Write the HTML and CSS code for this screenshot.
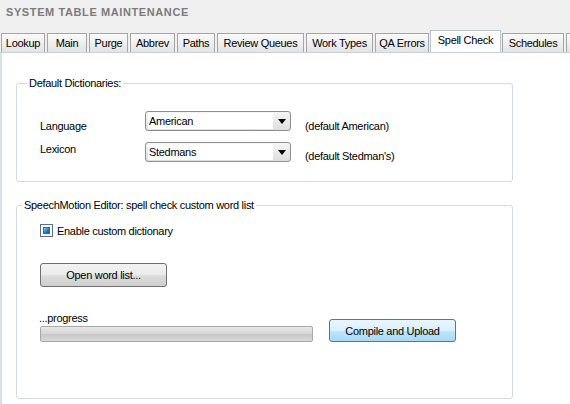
FILE: index.html
```html
<!DOCTYPE html>
<html>
<head>
    <title>System Table Maintenance</title>
    <meta charset="utf-8">
    <link rel="stylesheet" href="styles.css">
</head>
<body>
    <div class="title">SYSTEM TABLE MAINTENANCE</div>

    <div class="tabs">
        <div class="tab">Lookup</div>
        <div class="tab">Main</div>
        <div class="tab">Purge</div>
        <div class="tab">Abbrev</div>
        <div class="tab">Paths</div>
        <div class="tab">Review Queues</div>
        <div class="tab">Work Types</div>
        <div class="tab">QA Errors</div>
        <div class="tab active">Spell Check</div>
        <div class="tab">Schedules</div>
        <div class="tab"></div>
    </div>

    <div class="panel">
        <fieldset class="group dicts">
            <legend>Default Dictionaries:</legend>
            <div class="dict-row first">
                <div class="dict-label">Language</div>
                <div class="select">
                    <span>American</span>
                    <span class="arrow"></span>
                </div>
                <div class="dict-note">(default American)</div>
            </div>
            <div class="dict-row second">
                <div class="dict-label">Lexicon</div>
                <div class="select">
                    <span>Stedmans</span>
                    <span class="arrow"></span>
                </div>
                <div class="dict-note">(default Stedman's)</div>
            </div>
        </fieldset>

        <fieldset class="group words">
            <legend>SpeechMotion Editor: spell check custom word list</legend>
            <label class="check">
                <span class="box"><span class="fill"></span></span>
                Enable custom dictionary
            </label>
            <button class="btn">Open word list...</button>
            <div class="progress-row">
                <div class="progress-col">
                    <div class="progress-label">...progress</div>
                    <div class="progress"></div>
                </div>
                <button class="btn blue">Compile and Upload</button>
            </div>
        </fieldset>
    </div>
</body>
</html>
```

FILE: styles.css
```css
body {
    margin: 0;
    font-family: "Liberation Sans", Arial, sans-serif;
    font-size: 11px;
    letter-spacing: -0.3px;
    color: #000;
    background-color: #fff;
    width: 570px;
    height: 404px;
    overflow: hidden;
}
.title {
    background-color: #f0f0f0;
    color: #7b7b7b;
    font-weight: bold;
    font-size: 11px;
    letter-spacing: 0.6px;
    height: 26px;
    line-height: 25px;
    padding-left: 6px;
}
.tabs {
    display: grid;
    grid-template-columns: 46px 42px 41px 47px 40px 89px 69px 56px 71px 64px 20px;
    align-items: end;
    background-color: #f0f0f0;
    height: 26px;
    padding-left: 1px;
    border-bottom: 1px solid #c9d3dc;
    overflow: hidden;
}
.tab {
    height: 18px;
    line-height: 18px;
    margin-right: 2px;
    border: 1px solid #a5a5a5;
    border-bottom: none;
    background: linear-gradient(#fbfbfb, #e3e3e3);
    text-align: center;
    white-space: nowrap;
    overflow: hidden;
}
.tab.active {
    height: 22px;
    line-height: 19px;
    margin: 0 1px -1px -1px;
    background: #fff;
    border-color: #b8c4cf;
    position: relative;
}
.panel {
    border-left: 2px solid #d6e0ea;
    padding: 24px 0 0 14px;
    height: 327px;
}
.group {
    width: 479px;
    margin: 0;
    border: 1px solid #d2dbe4;
    border-radius: 3px;
    padding: 0 8px;
}
.group legend {
    padding: 0 2px;
    color: #000;
}
.dicts {
    height: 103px;
    margin-bottom: 17px;
}
.dicts legend {
    margin-left: 2px;
}
.dict-row {
    display: flex;
    align-items: center;
    padding-left: 15px;
}
.dict-row.first {
    margin-top: 22px;
}
.dict-row.second {
    margin-top: 11px;
}
.dict-label {
    width: 105px;
}
.first .dict-label {
    position: relative;
    top: 5px;
}
.second .dict-label {
    position: relative;
    top: -3px;
}
.dict-note {
    margin-left: 14px;
}
.first .dict-note {
    position: relative;
    top: 5px;
}
.second .dict-note {
    position: relative;
    top: 4px;
}
.select {
    display: flex;
    align-items: center;
    justify-content: space-between;
    width: 142px;
    height: 18px;
    border: 1px solid #8e8f8f;
    border-radius: 3px;
    background: linear-gradient(#f6f6f6, #dedede);
    padding-left: 2px;
    box-sizing: content-box;
}
.select span:first-child {
    background: #fff;
    flex: 1;
    height: 16px;
    line-height: 16px;
    padding-left: 1px;
}
.arrow {
    width: 0;
    height: 0;
    margin: 0 4px 0 5px;
    border-left: 4px solid transparent;
    border-right: 4px solid transparent;
    border-top: 5px solid #000;
}
.words {
    width: 464px;
    height: 198px;
    padding-left: 23px;
}
.words legend {
    margin-left: -18px;
}
.check {
    display: flex;
    align-items: center;
    gap: 4px;
    margin-top: 13px;
}
.box {
    width: 11px;
    height: 11px;
    border: 1px solid #5a6f82;
    background: #fff;
    display: flex;
    align-items: center;
    justify-content: center;
}
.fill {
    width: 7px;
    height: 7px;
    background: linear-gradient(135deg, #7fd3f7, #1a7bbf 60%, #0e5a9a);
    border: 1px solid #2a6ea6;
    box-sizing: border-box;
}
.btn {
    display: block;
    font-family: inherit;
    font-size: 11px;
    letter-spacing: -0.3px;
    width: 127px;
    height: 24px;
    margin-top: 26px;
    border: 1px solid #707070;
    border-radius: 3px;
    background: linear-gradient(#f2f2f2 0%, #ebebeb 50%, #dddddd 51%, #cfcfcf 100%);
    padding: 0;
    color: #000;
}
.progress-row {
    display: flex;
    align-items: flex-end;
    margin-top: 25px;
}
.progress-col {
    width: 273px;
}
.progress-label {
    margin-left: -1px;
    margin-bottom: 2px;
}
.progress {
    height: 14px;
    border: 1px solid #a8a8a8;
    border-radius: 2px;
    background: linear-gradient(#e8e8e8 0%, #d4d4d4 50%, #c6c6c6 51%, #dadada 100%);
}
.btn.blue {
    margin: 0 0 0 16px;
    height: 23px;
    border-color: #3c7fb1;
    background: linear-gradient(#eaf6fd 0%, #d9f0fc 50%, #bee6fd 51%, #a7d9f5 100%);
}
```
